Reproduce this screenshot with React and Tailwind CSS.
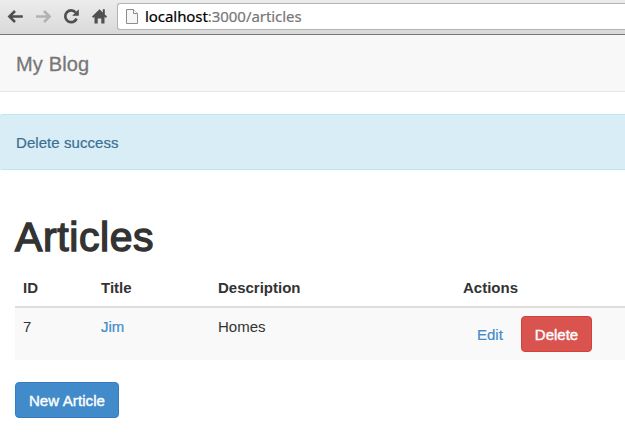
function Toolbar() {
  return (
    <div className="flex h-[35px] border-b border-[#777977] bg-linear-to-b from-[#ececec] to-[#d8dad8]">
      <svg className="block h-[34px] w-[117px] shrink-0" viewBox="0 0 117 34" fill="none">
        <g strokeWidth="2.6">
          <path d="M22.8 16.5H9.5M15 11L9.4 16.5L15 22" stroke="#505050" />
          <path d="M36 16.5H49.5M44 11L49.6 16.5L44 22" stroke="#b2b2b2" />
        </g>
        <path d="M75.7 12.5A5.9 5.9 0 1 0 76.6 18.6" stroke="#505050" strokeWidth="2.7" />
        <path d="M78.8 9.3V15.8H72.2Z" fill="#505050" />
        <path d="M99.5 9.2L107 16.6L105.8 17.9L104.5 16.8V23.6H101.3V18.5H97.7V23.6H94.5V16.8L93.2 17.9L92 16.6Z" fill="#505050" />
        <path d="M102.8 9.2H104.8V14H102.8Z" fill="#505050" />
      </svg>
      <div className="mt-[3px] flex h-[27px] flex-1 items-center rounded-l-[3px] border border-r-0 border-[#b2b4b2] bg-white pl-2">
        <svg className="h-4 w-[13px] shrink-0" viewBox="0 0 13 16">
          <path d="M0.5 0.5H7.5L11.5 4.5V14.5H0.5Z" fill="#f6f6f6" stroke="#8c8c8c" />
          <path d="M7.5 0.5V4.5H11.5" fill="#fff" stroke="#8c8c8c" />
        </svg>
        <span className="mb-[2px] ml-[6px] font-['Noto_Sans',sans-serif] text-[15px] leading-[20px] tracking-[-0.06px] whitespace-nowrap text-black [-webkit-text-stroke:0.2px]">
          localhost<span className="text-[#777]">:3000/articles</span>
        </span>
      </div>
    </div>
  );
}

const headings = ["ID", "Title", "Description", "Actions"];

export default function App() {
  return (
    <div className="h-[435px] w-[625px] overflow-hidden bg-white font-['Liberation_Sans',Arial,sans-serif] text-[15px] leading-[21px] text-[#333]">
      <Toolbar />
      <nav className="flex h-[57px] items-center border-b border-[#e7e7e7] bg-[#f8f8f8] pl-4 text-[20px] text-[#777]">
        <span className="pt-[2px] tracking-[0.15px] [-webkit-text-stroke:0.3px]">My Blog</span>
      </nav>
      <div className="mt-[22px] flex h-[56px] items-center rounded-l-[2px] border-y border-[#bce8f1] bg-[#d9edf7] pl-4 tracking-[0.06px] text-[#3a6f92] [-webkit-text-stroke:0.2px]">
        Delete success
      </div>
      <main className="pl-[15px]">
        <h1 className="mt-[44px] h-[55px] text-[41px] leading-[46px] tracking-[0.6px] [-webkit-text-stroke:1.4px_#333]">Articles</h1>
        <table className="w-full table-fixed border-collapse">
          <colgroup>
            <col className="w-[78px]" />
            <col className="w-[117px]" />
            <col className="w-[245px]" />
            <col />
          </colgroup>
          <thead>
            <tr className="h-[38px] border-b-2 border-[#ddd]">
              {headings.map((h) => (
                <th key={h} className="px-2 text-left font-bold">{h}</th>
              ))}
            </tr>
          </thead>
          <tbody>
            <tr className="h-[53px] bg-[#f9f9f9] align-top">
              <td className="px-2 pt-2">7</td>
              <td className="px-2 pt-2 text-[#428bca] [-webkit-text-stroke:0.2px]">Jim</td>
              <td className="px-2 pt-2">Homes</td>
              <td className="px-2 pt-2">
                <div className="flex items-center">
                  <a className="ml-[14px] w-[44px] text-[#428bca] [-webkit-text-stroke:0.2px]">Edit</a>
                  <button className="h-[36px] w-[71px] rounded-[4px] border border-[#d43f3a] bg-[#d9534f] text-white [-webkit-text-stroke:0.4px_white]">Delete</button>
                </div>
              </td>
            </tr>
          </tbody>
        </table>
        <button className="mt-[22px] h-[36px] w-[104px] rounded-[4px] border border-[#357ebd] bg-[#428bca] tracking-[0.1px] whitespace-nowrap text-white [-webkit-text-stroke:0.4px_white]">New Article</button>
      </main>
    </div>
  );
}
